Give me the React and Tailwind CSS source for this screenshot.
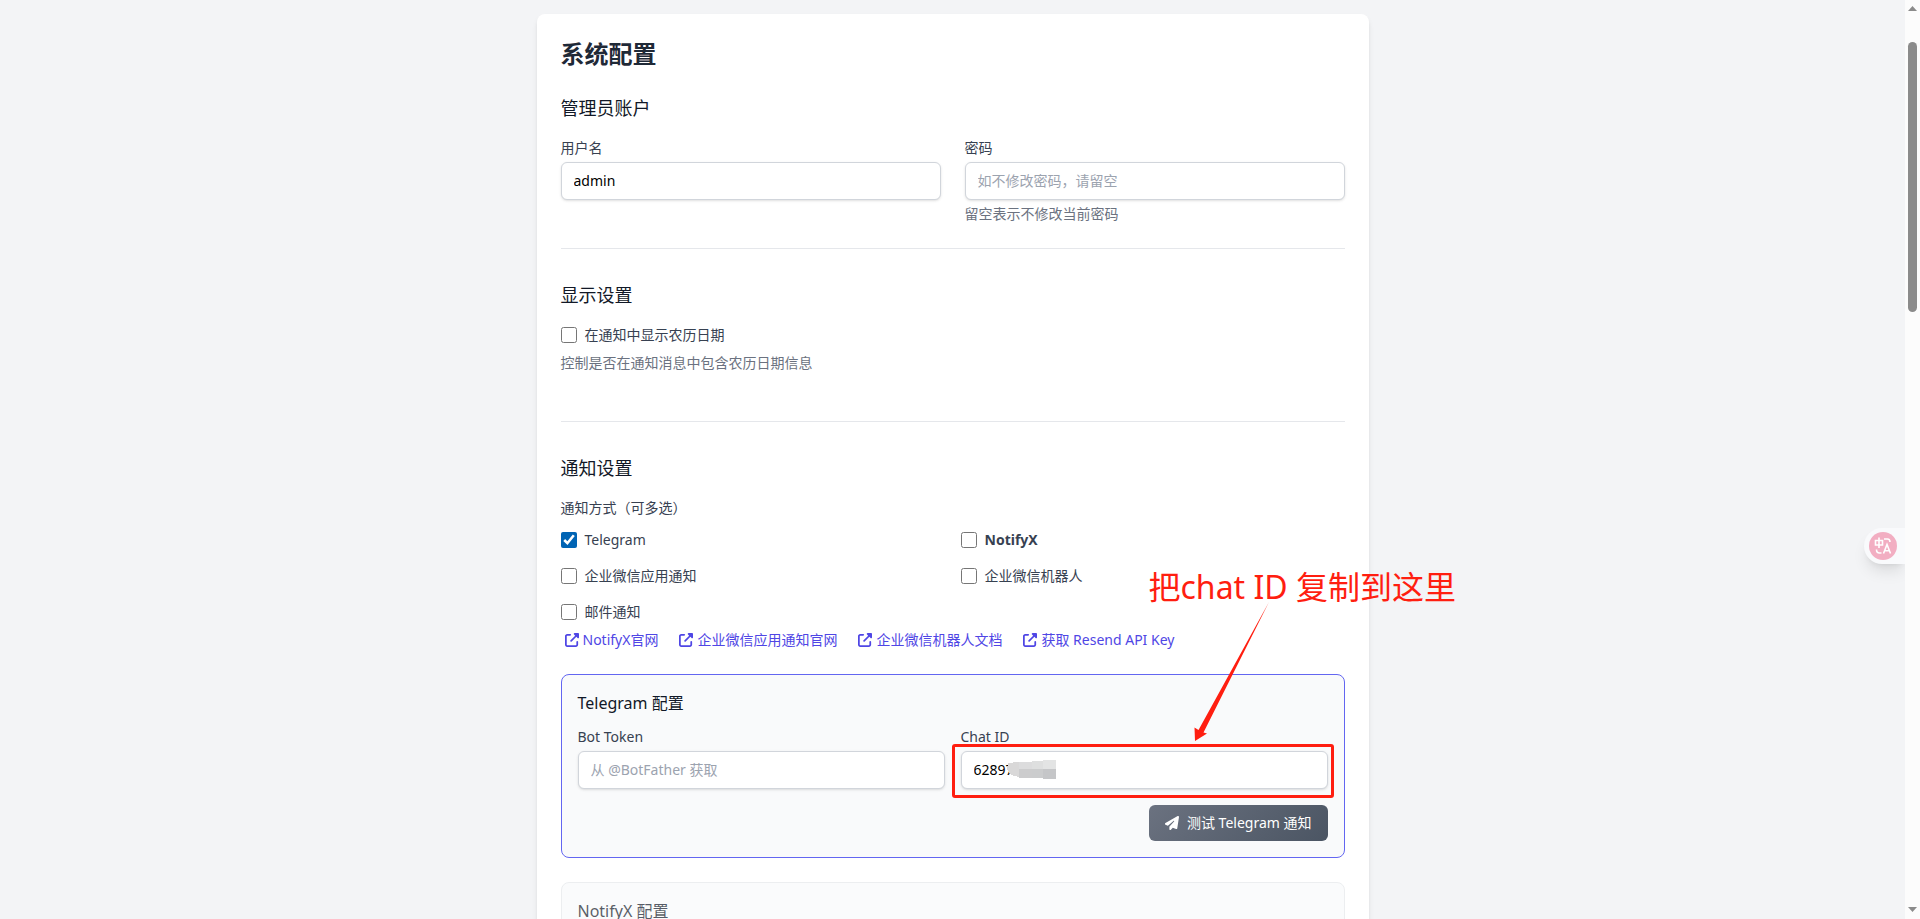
import { FaPaperPlane, FaUpRightFromSquare } from "react-icons/fa6";

const inputClass =
  "mt-1 block h-[38px] w-full rounded-md border border-[#d1d5db] bg-white px-3 pb-2.5 pt-2 text-sm text-black shadow-sm placeholder:text-[#9ca3af]";

function Field({ id, label, hint, children, ...props }) {
  return (
    <div className="relative">
      <label htmlFor={id} className="block text-sm text-[#374151]">{label}</label>
      <input id={id} className={inputClass} {...props} />
      {hint && <p className="mt-1 text-sm text-[#6b7280]">{hint}</p>}
      {children}
    </div>
  );
}

function Check({ label, bold, checked }) {
  return (
    <label className="flex items-center text-sm text-[#374151]">
      <input type="checkbox" defaultChecked={checked} className="h-4 w-4 accent-[#0064b4]" />
      <span className={bold ? "ml-2 font-bold" : "ml-2"}>{label}</span>
    </label>
  );
}

function DocLink({ children }) {
  return (
    <a href="#" className="flex items-center text-sm text-[#4f46e5]">
      <FaUpRightFromSquare className="ml-1 mr-1 h-3.5 w-3.5" />
      {children}
    </a>
  );
}

function Callout() {
  return (
    <div className="pointer-events-none absolute inset-0 text-[#ff1e10]">
      <div className="absolute -left-[9px] -right-[6px] top-[17px] h-[54px] rounded-[3px] border-3 border-[#ff1e10]" />
      <svg className="absolute left-[228px] -top-[127px]" width="90" height="142" viewBox="0 0 90 142" fill="currentColor" aria-hidden="true">
        <path d="M80 2 L14.500 132.500 L18 133.500 L6 141 L5.500 127.500 L9.500 130 Z" />
      </svg>
      <div className="absolute -top-[164px] left-[188px] whitespace-nowrap text-[32px] leading-[48px]">把chat ID 复制到这里</div>
    </div>
  );
}

function Mosaic() {
  return (
    <svg className="absolute left-[46px] top-[33px]" width="49" height="20" viewBox="0 0 49 20" shapeRendering="crispEdges" aria-hidden="true">
      <path d="M1 3 L12 2 V17 L4 15 L0 9 Z" fill="#d9d8d8" />
      <rect x="12" y="2" width="13" height="7" fill="#dcdcdd" />
      <rect x="12" y="9" width="13" height="9" fill="#cccccd" />
      <rect x="25" y="1" width="11" height="8" fill="#dedfdf" />
      <rect x="25" y="9" width="11" height="9" fill="#cbcccd" />
      <rect x="36" y="0" width="13" height="9" fill="#e3e4e4" />
      <rect x="36" y="9" width="13" height="10" fill="#c5c6c8" />
    </svg>
  );
}

export default function App() {
  return (
    <div className="flex h-screen overflow-hidden bg-[#f3f4f6] font-['Noto_Sans','Noto_Sans_CJK_SC',sans-serif]">
      <div className="relative min-w-0 flex-1 overflow-hidden">
        <main className="mx-auto mt-3.5 max-w-[832px] rounded-lg bg-white p-6 shadow-md">
          <h2 className="mb-6 text-2xl font-bold text-[#1f2937]">系统配置</h2>
          <form className="space-y-8">
            <section className="border-b border-[#e5e7eb] pb-6">
              <h3 className="mb-4 text-lg text-[#111827]">管理员账户</h3>
              <div className="grid grid-cols-2 gap-6">
                <Field id="username" label="用户名" defaultValue="admin" />
                <Field id="password" type="password" label="密码" placeholder="如不修改密码，请留空" hint="留空表示不修改当前密码" />
              </div>
            </section>

            <section className="border-b border-[#e5e7eb] pb-12">
              <h3 className="mb-4 text-lg text-[#111827]">显示设置</h3>
              <Check label="在通知中显示农历日期" />
              <p className="mt-2 text-sm text-[#6b7280]">控制是否在通知消息中包含农历日期信息</p>
            </section>

            <section>
              <h3 className="mb-4 text-lg text-[#111827]">通知设置</h3>
              <p className="mb-3 text-sm text-[#374151]">通知方式（可多选）</p>
              <div className="grid grid-cols-2 gap-4">
                <Check label="Telegram" checked />
                <Check label="NotifyX" bold />
                <Check label="企业微信应用通知" />
                <Check label="企业微信机器人" />
                <Check label="邮件通知" />
              </div>
              <div className="mb-6 mt-2 flex flex-wrap gap-[17px]">
                <DocLink>NotifyX官网</DocLink>
                <DocLink>企业微信应用通知官网</DocLink>
                <DocLink>企业微信机器人文档</DocLink>
                <DocLink>获取 Resend API Key</DocLink>
              </div>

              <div className="mb-6 rounded-lg border border-[#6366f1] bg-[#f9fafb] p-4">
                <h4 className="mb-3 text-base text-[#111827]">Telegram 配置</h4>
                <div className="mb-4 grid grid-cols-2 gap-4">
                  <Field id="bot-token" label="Bot Token" placeholder="从 @BotFather 获取" />
                  <Field id="chat-id" label="Chat ID" defaultValue="62897">
                    <Mosaic />
                    <Callout />
                  </Field>
                </div>
                <div className="flex justify-end">
                  <button type="button" className="flex h-9 items-center rounded-md bg-linear-135 from-[#6b7280] to-[#4b5563] px-4 text-sm text-white">
                    <FaPaperPlane className="mr-2 h-3.5 w-3.5" />
                    测试 Telegram 通知
                  </button>
                </div>
              </div>

              <div className="rounded-lg border border-[#e5e7eb] bg-[#f9fafb] p-4 opacity-70">
                <h4 className="mb-3 text-base text-[#111827]">NotifyX 配置</h4>
              </div>
            </section>
          </form>
        </main>

        <button type="button" aria-label="翻译" className="absolute right-0 top-[528px] flex h-9 w-[41px] items-center rounded-l-full bg-[#f9fafc] pl-[5px] shadow-lg">
          <svg width="28" height="28" viewBox="0 0 28 28" aria-hidden="true">
            <circle cx="14" cy="14" r="14" fill="#f2aec2" />
            <g fill="none" stroke="#fff" strokeWidth="1.6">
              <path d="M6.500 8.500 H13.500 V13 H6.500 Z M10 5.500 V16" />
              <path d="M15 7 H18.500 Q21 7 21 10 M7.500 17.500 Q7.500 21 10.500 21 H12.500" />
              <path d="M14.500 21.500 L18 12.500 L21.500 21.500 M15.800 18.800 H20.200" />
            </g>
          </svg>
        </button>
      </div>

      <div className="flex w-[15px] flex-col items-center bg-[#fcfcfc] pb-[7px] pt-1.5" aria-hidden="true">
        <svg width="9" height="5" viewBox="0 0 9 5" fill="#8b8b8b"><path d="M4.500 0 L9 5 H0 Z" /></svg>
        <div className="mt-[31px] h-[270px] w-[9px] rounded-full bg-[#8b8b8b]" />
        <svg className="mt-auto" width="9" height="5" viewBox="0 0 9 5" fill="#8b8b8b"><path d="M0 0 H9 L4.500 5 Z" /></svg>
      </div>
    </div>
  );
}
